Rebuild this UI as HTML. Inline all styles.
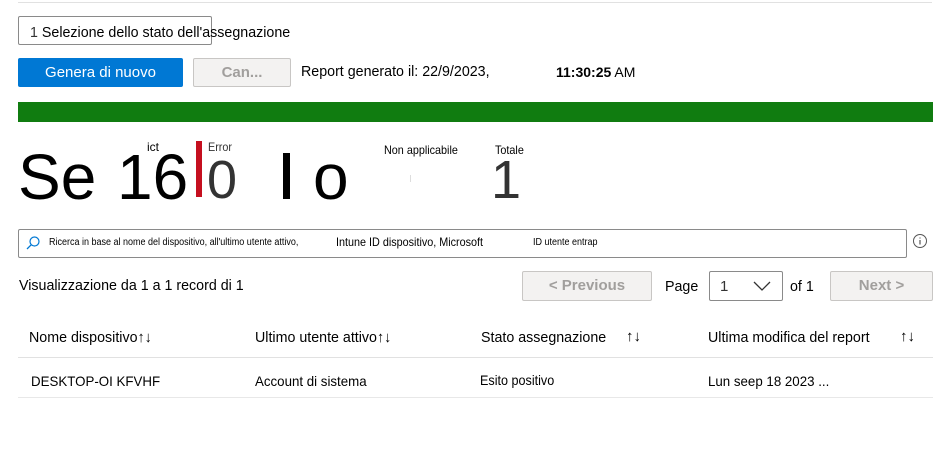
<!DOCTYPE html>
<html><head><meta charset="utf-8"><style>
body{margin:0;width:944px;height:468px;background:#fff;font-family:"Liberation Sans",Arial,sans-serif;color:#000;position:relative;overflow:hidden}
.a{position:absolute;white-space:nowrap}
.n{transform-origin:left center;transform:scaleX(.9)}
.m{transform-origin:left center;transform:scaleX(.95)}
.btn{position:absolute;box-sizing:border-box;border-radius:2px;font-size:15px;text-align:center}
</style></head><body>
<div class="a" style="left:18px;top:2px;width:914px;height:1px;background:#e1e1e1"></div>
<div class="a" style="left:18px;top:16px;width:194px;height:29px;box-sizing:border-box;border:1px solid #8a8a8a;border-radius:2px"></div>
<div class="a m" style="left:30px;top:24px;font-size:15px"><span style="color:#333">1</span> Selezione dello stato dell'assegnazione</div>
<div class="btn" style="left:18px;top:58px;width:165px;height:29px;background:#0078d4;color:#fff;line-height:29px">Genera di nuovo</div>
<div class="btn" style="left:193px;top:58px;width:98px;height:29px;background:#f3f2f1;border:1px solid #c8c6c4;color:#a19f9d;line-height:27px;font-weight:bold">Can...</div>
<div class="a m" style="left:301px;top:63px;font-size:15px">Report generato il: 22/9/2023,</div>
<div class="a" style="left:556px;top:64px;font-size:14px"><b>11:30:25</b> AM</div>
<div class="a" style="left:18px;top:102px;width:915px;height:20px;background:#107c10"></div>
<div class="a" style="left:18px;top:137px;font-size:64px;line-height:80px">Se</div>
<div class="a" style="left:117px;top:137px;font-size:64px;line-height:80px">16</div>
<div class="a" style="left:147px;top:140px;font-size:12px">ict</div>
<div class="a" style="left:196px;top:141px;width:6px;height:56px;background:#c50f1f"></div>
<div class="a n" style="left:208px;top:140px;font-size:12px;color:#333">Error</div>
<div class="a" style="left:207px;top:147px;font-size:54px;line-height:66px;color:#333">0</div>
<div class="a" style="left:283px;top:153px;width:7px;height:46px;background:#000"></div>
<div class="a" style="left:313px;top:137px;font-size:64px;line-height:80px">o</div>
<div class="a n" style="left:384px;top:143px;font-size:12px">Non applicabile</div>
<div class="a" style="left:410px;top:175px;width:1px;height:7px;background:#ddd"></div>
<div class="a n" style="left:495px;top:143px;font-size:12px">Totale</div>
<div class="a" style="left:491px;top:147px;font-size:54px;line-height:66px;color:#333">1</div>
<div class="a" style="left:18px;top:229px;width:889px;height:29px;box-sizing:border-box;border:1px solid #8a8a8a;border-radius:2px"></div>
<svg class="a" style="left:25px;top:235px" width="16" height="16" viewBox="0 0 16 16"><circle cx="9.5" cy="6.5" r="4.5" fill="none" stroke="#0078d4" stroke-width="1.2"/><path d="M6.3 9.7L2 14" stroke="#0078d4" stroke-width="1.3"/></svg>
<div class="a n" style="left:49px;top:237px;font-size:10px">Ricerca in base al nome del dispositivo, all'ultimo utente attivo,</div>
<div class="a n" style="left:336px;top:235px;font-size:12px">Intune ID dispositivo, Microsoft</div>
<div class="a n" style="left:533px;top:237px;font-size:10px">ID utente entrap</div>
<svg class="a" style="left:912px;top:233px" width="16" height="16" viewBox="0 0 16 16"><circle cx="8" cy="8" r="6.5" fill="none" stroke="#555" stroke-width="1"/><path d="M8 7v4.5M8 4.5v1" stroke="#555" stroke-width="1.2"/></svg>
<div class="a m" style="left:19px;top:277px;font-size:15px">Visualizzazione da 1 a 1 record di 1</div>
<div class="btn" style="left:522px;top:271px;width:130px;height:30px;background:#f3f2f1;border:1px solid #c8c6c4;color:#a19f9d;line-height:28px;font-weight:bold">&lt; Previous</div>
<div class="a m" style="left:665px;top:278px;font-size:15px">Page</div>
<div class="a" style="left:709px;top:271px;width:74px;height:30px;box-sizing:border-box;border:1px solid #8a8a8a;border-radius:2px"></div>
<div class="a" style="left:720px;top:278px;font-size:15px;color:#333">1</div>
<svg class="a" style="left:752px;top:280px" width="20" height="12" viewBox="0 0 20 12"><path d="M2 2l8 8 8-8" fill="none" stroke="#333" stroke-width="1.3"/></svg>
<div class="a m" style="left:790px;top:278px;font-size:15px">of 1</div>
<div class="btn" style="left:830px;top:271px;width:103px;height:30px;background:#f3f2f1;border:1px solid #c8c6c4;color:#a19f9d;line-height:28px;font-weight:bold">Next &gt;</div>
<div class="a m" style="left:29px;top:329px;font-size:15px">Nome dispositivo↑↓</div>
<div class="a m" style="left:255px;top:329px;font-size:15px">Ultimo utente attivo↑↓</div>
<div class="a m" style="left:481px;top:329px;font-size:15px">Stato assegnazione</div>
<div class="a" style="left:626px;top:328px;font-size:15px">↑↓</div>
<div class="a m" style="left:708px;top:329px;font-size:15px">Ultima modifica del report</div>
<div class="a" style="left:900px;top:328px;font-size:15px">↑↓</div>
<div class="a" style="left:18px;top:357px;width:915px;height:1px;background:#e1e1e1"></div>
<div class="a m" style="left:31px;top:373px;font-size:14px">DESKTOP-OI KFVHF</div>
<div class="a m" style="left:255px;top:373px;font-size:14px">Account di sistema</div>
<div class="a n" style="left:480px;top:372px;font-size:14px">Esito positivo</div>
<div class="a m" style="left:708px;top:373px;font-size:14px">Lun seep 18 2023 ...</div>
<div class="a" style="left:18px;top:397px;width:915px;height:1px;background:#e8e8e8"></div>
</body></html>
